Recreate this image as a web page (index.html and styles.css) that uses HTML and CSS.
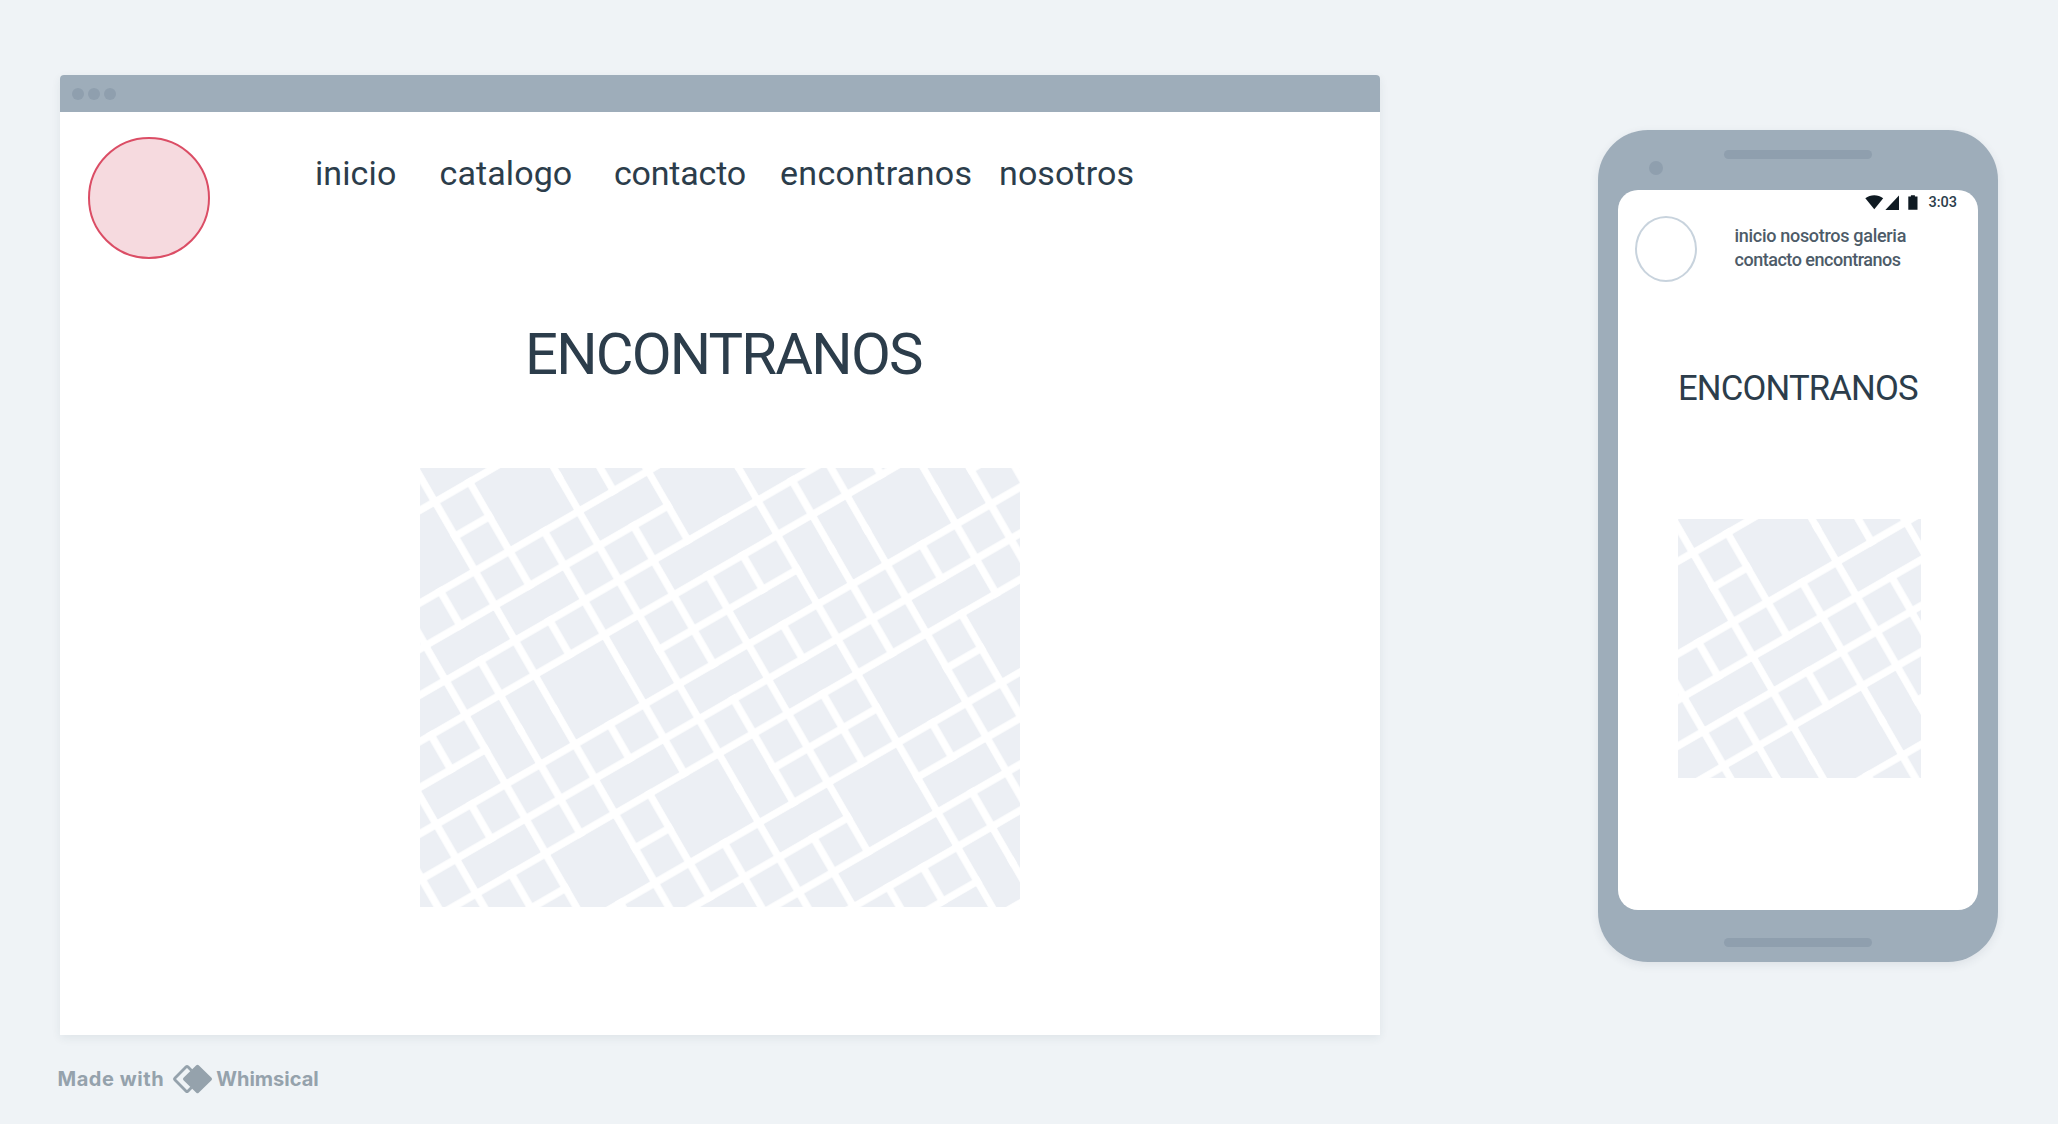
FILE: index.html
```
<!DOCTYPE html>
<html lang="es">
<head>
<meta charset="utf-8">
<title>Encontranos</title>
<link rel="stylesheet" href="styles.css">
</head>
<body>
<svg class="defs" width="0" height="0" aria-hidden="true">
  <defs>
    <!-- one city cell: 40 x 40 with a 7.5 wide street around it -->
    <pattern id="cells" width="40" height="40" patternUnits="userSpaceOnUse">
      <rect class="cell" x="3.75" y="3.75" width="32.5" height="32.5"/>
    </pattern>
    <g id="streets" transform="rotate(-30) translate(36 36.7)">
      <rect x="-320" y="-80" width="880" height="800" fill="url(#cells)"/>
      <!-- double blocks along the avenue -->
      <path d="M-36.25-36.25h72.5v32.5h-72.5zM83.75 83.75h72.5v32.5h-72.5zM-116.25 123.75h72.5v32.5h-72.5zM-36.25 123.75h72.5v32.5h-72.5zM243.75 123.75h72.5v32.5h-72.5zM-196.25 163.75h72.5v32.5h-72.5zM-196.25 243.75h72.5v32.5h-72.5zM163.75 243.75h72.5v32.5h-72.5zM83.75 283.75h72.5v32.5h-72.5zM-196.25 323.75h72.5v32.5h-72.5zM-36.25 323.75h72.5v32.5h-72.5zM163.75 323.75h72.5v32.5h-72.5zM323.75 323.75h72.5v32.5h-72.5zM83.75 443.75h72.5v32.5h-72.5zM-36.25 483.75h72.5v32.5h-72.5zM243.75 483.75h72.5v32.5h-72.5zM163.75 603.75h72.5v32.5h-72.5z"/>
      <!-- triple blocks -->
      <path d="M123.75 163.75h112.5v32.5h-112.5zM123.75 523.75h112.5v32.5h-112.5z"/>
      <!-- double blocks across the avenue -->
      <path d="M83.75 3.75h32.5v72.5h-32.5zM-116.25 203.75h32.5v72.5h-32.5zM-76.25 203.75h32.5v72.5h-32.5zM43.75 203.75h32.5v72.5h-32.5zM243.75 203.75h32.5v72.5h-32.5zM283.75 203.75h32.5v72.5h-32.5zM403.75 203.75h32.5v72.5h-32.5zM83.75 363.75h32.5v72.5h-32.5zM243.75 563.75h32.5v72.5h-32.5zM283.75 563.75h32.5v72.5h-32.5z"/>
      <!-- squares -->
      <path d="M-116.25 3.75h72.5v72.5h-72.5zM3.75 3.75h72.5v72.5h-72.5zM163.75 83.75h72.5v72.5h-72.5zM-36.25 203.75h72.5v72.5h-72.5zM323.75 203.75h72.5v72.5h-72.5zM243.75 363.75h72.5v72.5h-72.5zM363.75 363.75h72.5v72.5h-72.5zM3.75 363.75h72.5v72.5h-72.5zM-116.25 363.75h72.5v72.5h-72.5zM163.75 443.75h72.5v72.5h-72.5z"/>
    </g>
  </defs>
</svg>

<main class="board">
  <section class="browser">
    <div class="browser-bar"><i class="dot"></i><i class="dot"></i><i class="dot"></i></div>
    <header class="browser-head">
      <div class="logo"></div>
      <nav class="menu">
        <a>inicio</a><a>catalogo</a><a class="tight">contacto</a><a class="wide">encontranos</a><a>nosotros</a>
      </nav>
    </header>
    <h1 class="title">ENCONTRANOS</h1>
    <svg class="map" width="600" height="439" viewBox="0 0 600 439"><use href="#streets"/></svg>
  </section>

  <section class="phone">
    <div class="speaker"></div>
    <div class="camera"></div>
    <div class="screen">
      <div class="status">
        <svg class="status-icons" width="54" height="16" viewBox="0 0 54 16">
          <path d="M.3 3.2C5.6-.7 12.9-.7 18.2 3.2L9.3 14.3z"/>
          <path d="M34 .6V15H20.4z"/>
          <path d="M43.3 1.4h2.6V.3h4v1.100h2.600V14.800h-9.200z"/>
        </svg>
        <span class="clock">3:03</span>
      </div>
      <div class="phone-head">
        <div class="avatar"></div>
        <div class="phone-menu"><span class="first">inicio nosotros galeria</span><br><span class="second">contacto encontranos</span></div>
      </div>
      <h2 class="phone-title">ENCONTRANOS</h2>
      <svg class="phone-map" width="243" height="259" viewBox="0 0 243 259"><use href="#streets"/></svg>
    </div>
    <div class="speaker"></div>
  </section>
</main>

<footer class="credit">
  <span class="made">Made with</span>
  <svg class="mark" width="42" height="30" viewBox="0 0 42 30">
    <path d="M19.500 6.500 15.800 2.800q-.800-.800-1.600 0L2.800 14.200q-.800.800 0 1.600L14.200 27.200q.800.800 1.600 0L19.500 23.500" class="mark-line"/>
    <path d="M24.300 1.300q1.200-1.200 2.400 0L39.500 13.800q1.200 1.200 0 2.400L26.700 28.700q-1.200 1.200-2.400 0L11.500 16.200q-1.200-1.200 0-2.400z"/>
  </svg>
  <span class="brand">Whimsical</span>
</footer>
</body>
</html>
```
FILE: styles.css
```
* { box-sizing: border-box; }

body {
  margin: 0;
  width: 2058px;
  height: 1124px;
  overflow: hidden;
  background: #eff3f6;
  color: #2c3d4b;
  font-family: Roboto, "Liberation Sans", sans-serif;
}

.defs { display: block; }
.cell { fill: #eceff4; }

.board {
  display: flex;
  align-items: flex-start;
  justify-content: space-between;
  height: 1035px;
  padding: 75px 60px 0 60px;
}

/* desktop window */
.browser {
  width: 1320px;
  height: 960px;
  background: #fff;
  border-radius: 4px 4px 0 0;
  box-shadow: 0 3px 10px rgba(40, 60, 80, .08);
}

.browser-bar {
  display: flex;
  align-items: center;
  gap: 4px;
  height: 37px;
  padding-left: 12px;
  background: #9eadba;
  border-radius: 4px 4px 0 0;
}

.dot {
  width: 12px;
  height: 12px;
  border-radius: 50%;
  background: #8f9fae;
}

.browser-head {
  display: flex;
  height: 208px;
  padding: 25px 0 0 28px;
}

.logo {
  width: 122px;
  height: 122px;
  border: 2px solid #db4d65;
  border-radius: 50%;
  background: #f6dadf;
}

.menu {
  display: grid;
  grid-template-columns: 124.500px 174.500px 166px 219px 150px;
  height: 40px;
  margin: 16px 0 0 105px;
  font-size: 34px;
  line-height: 40px;
  letter-spacing: .1px;
}

.tight { letter-spacing: -.200px; }
.wide { letter-spacing: .300px; }

.title {
  margin: 0 0 0 465px;
  font-size: 58px;
  font-weight: 400;
  line-height: 68px;
  letter-spacing: -1.800px;
}

.map {
  display: block;
  margin: 80px 0 0 360px;
  fill: #eceff4;
}

/* phone */
.phone {
  display: flex;
  flex-direction: column;
  align-items: center;
  width: 400px;
  height: 832px;
  margin-top: 55px;
  padding-top: 20px;
  background: #9eadba;
  border-radius: 50px;
  box-shadow: 0 3px 10px rgba(40, 60, 80, .09);
}

.speaker {
  width: 148px;
  height: 8.500px;
  border-radius: 5px;
  background: #8f9fae;
}

.camera {
  align-self: flex-start;
  width: 14px;
  height: 14px;
  margin: 2px 0 15.500px 51px;
  border-radius: 50%;
  background: #8f9fae;
}

.screen {
  width: 360px;
  height: 720px;
  margin-bottom: 28px;
  background: #fff;
  border-radius: 20px;
}

.status {
  display: flex;
  align-items: flex-start;
  height: 26px;
  padding: 4px 0 0 247px;
}

.status-icons {
  margin-top: 1px;
  fill: #0f1a22;
}

.clock {
  margin-left: 9.500px;
  font-size: 14.500px;
  font-weight: 500;
  line-height: 18px;
}

.phone-head {
  display: flex;
  height: 152px;
  padding-left: 17px;
}

.avatar {
  width: 62px;
  height: 66px;
  border: 2px solid #c8d3dd;
  border-radius: 50%;
}

.phone-menu {
  margin: 8px 0 0 37.500px;
  color: #4d5b68;
  font-size: 18px;
  font-weight: 500;
  line-height: 24px;
  white-space: nowrap;
}

.first { letter-spacing: -.300px; }
.second { letter-spacing: -.480px; }

.phone-title {
  margin: 0 0 0 60px;
  font-size: 34.700px;
  font-weight: 400;
  line-height: 40px;
  letter-spacing: -.850px;
}

.phone-map {
  display: block;
  margin: 111px 0 0 60px;
  fill: #eceff4;
}

/* credit line */
.credit {
  display: flex;
  align-items: center;
  height: 30px;
  margin: 29px 0 0 57.500px;
  color: #95a2ac;
  font-family: Inter, "Liberation Sans", sans-serif;
  font-size: 20px;
  font-weight: 700;
  line-height: 30px;
}

.made { letter-spacing: .550px; }
.mark { margin-left: 8px; fill: #95a2ac; }
.mark-line { fill: none; stroke: #95a2ac; stroke-width: 2.800; }
.brand { margin-left: 2px; }
```
